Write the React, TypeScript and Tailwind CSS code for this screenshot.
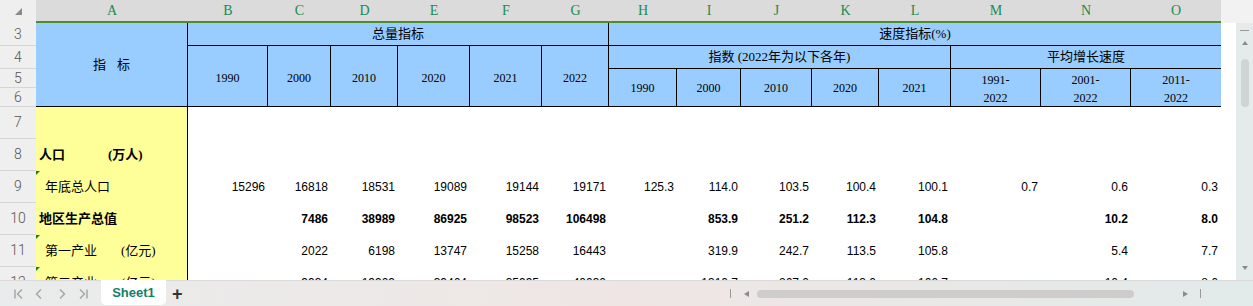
import { ReactNode } from "react";

const letters = ["A", "B", "C", "D", "E", "F", "G", "H", "I", "J", "K", "L", "M", "N", "O"];

const serif = "font-['Liberation_Serif','Noto_Sans_CJK_SC',serif]";
const sans = "font-['Liberation_Sans','Noto_Sans_CJK_SC',sans-serif]";
const cjk = "font-['Liberation_Serif','Noto_Sans_CJK_SC',sans-serif]";

interface DataRow {
  n: number;
  label?: ReactNode;
  bold?: boolean;
  mark?: boolean;
  vals: string[];
}

const rows: DataRow[] = [
  { n: 7, vals: [] },
  {
    n: 8,
    bold: true,
    label: (
      <>
        <span>人口</span>
        <span className="ml-[43px]">(万人)</span>
      </>
    ),
    vals: [],
  },
  {
    n: 9,
    mark: true,
    label: <span className="pl-[6px]">年底总人口</span>,
    vals: ["15296", "16818", "18531", "19089", "19144", "19171", "125.3", "114.0", "103.5", "100.4", "100.1", "0.7", "0.6", "0.3"],
  },
  {
    n: 10,
    bold: true,
    label: <span>地区生产总值</span>,
    vals: ["", "7486", "38989", "86925", "98523", "106498", "", "853.9", "251.2", "112.3", "104.8", "", "10.2", "8.0"],
  },
  {
    n: 11,
    mark: true,
    label: (
      <>
        <span className="pl-[6px]">第一产业</span>
        <span className="ml-[24px]">(亿元)</span>
      </>
    ),
    vals: ["", "2022", "6198", "13747", "15258", "16443", "", "319.9", "242.7", "113.5", "105.8", "", "5.4", "7.7"],
  },
  {
    n: 12,
    mark: true,
    label: (
      <>
        <span className="pl-[6px]">第二产业</span>
        <span className="ml-[24px]">(亿元)</span>
      </>
    ),
    vals: ["", "9934", "19909", "39464", "35995", "40030", "", "1310.7", "267.0", "113.0", "106.7", "", "10.4", "8.6"],
  },
];

function RowHead({ n }: { n: number }) {
  return (
    <div className="flex items-center justify-center bg-[#efefef] border-b border-[#d6d6d6] text-[14px] font-light text-[#555] font-['Roboto',sans-serif]">
      {n}
    </div>
  );
}

function Nav() {
  return (
    <div className="flex items-center text-[#a3a3a3]">
      <svg width="12" height="12" viewBox="0 0 12 12" className="ml-[13px]" fill="none" stroke="currentColor" strokeWidth="1.4">
        <path d="M2 1.5v9M9 1.5L4.5 6 9 10.5" />
      </svg>
      <svg width="8" height="12" viewBox="0 0 8 12" className="ml-[10px]" fill="none" stroke="currentColor" strokeWidth="1.4">
        <path d="M6 1.5L1.5 6 6 10.5" />
      </svg>
      <svg width="8" height="12" viewBox="0 0 8 12" className="ml-[15px]" fill="none" stroke="currentColor" strokeWidth="1.4">
        <path d="M2 1.5L6.5 6 2 10.5" />
      </svg>
      <svg width="12" height="12" viewBox="0 0 12 12" className="ml-[11px]" fill="none" stroke="currentColor" strokeWidth="1.4">
        <path d="M3 1.5L7.5 6 3 10.5M10 1.5v9" />
      </svg>
    </div>
  );
}

export default function App() {
  return (
    <div className="w-[1253px] h-[306px] flex flex-col overflow-hidden bg-white">
      <div className="flex h-[280px] overflow-hidden">
        <div className="w-[1221px] overflow-hidden">
          <div className="grid grid-cols-[36px_152px_80px_63px_67px_72px_72px_67px_68px_64px_71px_67px_72px_90px_90px_90px] grid-rows-[23px_23px_23px_19px_19px_32px_32px_32px_32px_32px_32px]">
            {/* corner */}
            <div className="relative bg-[#efefef]">
              <svg width="8" height="8" viewBox="0 0 8 8" className="absolute left-[15px] top-[8px]">
                <polygon points="7,0 7,7 0,7" fill="#8a8a8a" />
              </svg>
            </div>
            {letters.map((l) => (
              <div
                key={l}
                className="flex items-center justify-center pb-[1px] bg-[#dbdbdb] border-b-2 border-[#4b8f2b] text-[14px] text-[#1b8a4f] font-['Liberation_Serif',serif]"
              >
                {l}
              </div>
            ))}

            {/* row 3 */}
            <RowHead n={3} />
            <div className={`row-span-4 flex items-center justify-center gap-[11px] bg-[#99ccff] border-r border-b border-black text-[13px] text-black ${cjk}`}>
              <span>指</span>
              <span>标</span>
            </div>
            <div className={`col-span-6 flex items-center justify-center bg-[#99ccff] border-r border-b border-black text-[13px] ${cjk}`}>
              总量指标
            </div>
            <div className={`col-span-8 flex items-center justify-center bg-[#99ccff] border-b border-black text-[13px] ${cjk}`}>
              速度指标(%)
            </div>

            {/* row 4 */}
            <RowHead n={4} />
            {["1990", "2000", "2010", "2020", "2021", "2022"].map((y) => (
              <div key={y} className={`row-span-3 flex items-center justify-center pt-[3px] bg-[#99ccff] border-r border-b border-black text-[12px] ${serif}`}>
                {y}
              </div>
            ))}
            <div className={`col-span-5 flex items-center justify-center bg-[#99ccff] border-r border-b border-black text-[13px] ${cjk}`}>
              指数 (2022年为以下各年)
            </div>
            <div className={`col-span-3 flex items-center justify-center bg-[#99ccff] border-b border-black text-[13px] ${cjk}`}>
              平均增长速度
            </div>

            {/* row 5 */}
            <RowHead n={5} />
            {["1990", "2000", "2010", "2020", "2021"].map((y) => (
              <div key={y} className={`row-span-2 flex items-center justify-center pt-[1px] bg-[#99ccff] border-r border-b border-black text-[12px] ${serif}`}>
                {y}
              </div>
            ))}
            {["1991-", "2001-", "2011-"].map((y, i) => (
              <div
                key={y}
                className={`row-span-2 flex flex-col items-center justify-center pt-[2px] leading-[18px] bg-[#99ccff] border-b border-black text-[12px] ${serif} ${i < 2 ? "border-r" : ""}`}
              >
                <span>{y}</span>
                <span>2022</span>
              </div>
            ))}

            {/* row 6 */}
            <RowHead n={6} />

            {rows.map((r) => (
              <>
                <RowHead key={`h${r.n}`} n={r.n} />
                <div
                  key={`a${r.n}`}
                  className={`relative flex items-center pl-[3px] bg-[#ffff99] border-r border-black text-[13px] text-black whitespace-nowrap ${cjk} ${r.bold ? "font-bold" : ""}`}
                >
                  {r.mark && (
                    <svg width="4" height="4" viewBox="0 0 4 4" className="absolute left-0 top-0">
                      <polygon points="0,0 4,0 0,4" fill="#1f7a1f" />
                    </svg>
                  )}
                  {r.label}
                </div>
                {letters.slice(1).map((l, i) => (
                  <div
                    key={`${r.n}${l}`}
                    className={`flex items-center justify-end pr-[3px] text-[12px] text-black ${sans} ${r.bold ? "font-bold" : ""}`}
                  >
                    {r.vals[i] ?? ""}
                  </div>
                ))}
              </>
            ))}
          </div>
        </div>

        {/* right gutter + vertical scrollbar */}
        <div className="w-[32px] flex flex-col">
          <div className="h-[23px] bg-[#f2f2f2]" />
          <div className="flex-1 flex">
            <div className="w-[15px] bg-white" />
            <div className="w-[17px] bg-[#e5eaea] flex flex-col items-center">
              <div className="mt-[7px] w-[9px] h-px bg-[#9a9a9a]" />
              <svg width="6" height="4" viewBox="0 0 6 4" className="mt-[10px]">
                <polygon points="3,0 6,4 0,4" fill="#8c8c8c" />
              </svg>
              <div className="mt-[14px] w-[8px] h-[48px] rounded-full bg-[#d0d4d4]" />
              <div className="flex-1" />
              <svg width="6" height="4" viewBox="0 0 6 4" className="mb-[10px]">
                <polygon points="0,0 6,0 3,4" fill="#8c8c8c" />
              </svg>
            </div>
          </div>
        </div>
      </div>

      {/* bottom sheet bar */}
      <div className="h-[26px] flex items-stretch border-t border-[#dadada] bg-linear-to-r from-[#e9ecec] via-[#efe6e4] to-[#e2eaea]">
        <div className="w-[101px] flex items-center">
          <Nav />
        </div>
        <div className="w-[65px] -mt-px mb-[1px] flex items-center justify-center bg-white rounded-b-[5px] text-[13px] font-bold text-[#12806a] font-['Liberation_Sans',sans-serif]">
          Sheet1
        </div>
        <div className="ml-[6px] flex items-center text-[18px] font-bold text-[#333] font-['Liberation_Sans',sans-serif] leading-none">
          +
        </div>
        <div className="ml-[547px] flex items-center">
          <div className="w-px h-[9px] bg-[#9a9a9a]" />
          <svg width="5" height="6" viewBox="0 0 5 6" className="ml-[13px]">
            <polygon points="0,3 5,0 5,6" fill="#8c8c8c" />
          </svg>
          <div className="ml-[8px] w-[377px] h-[8px] rounded-full bg-[#cfcdcc]" />
          <svg width="5" height="6" viewBox="0 0 5 6" className="ml-[49px]">
            <polygon points="0,0 5,3 0,6" fill="#8c8c8c" />
          </svg>
          <div className="ml-[12px] w-px h-[9px] bg-[#9a9a9a]" />
        </div>
      </div>
    </div>
  );
}
